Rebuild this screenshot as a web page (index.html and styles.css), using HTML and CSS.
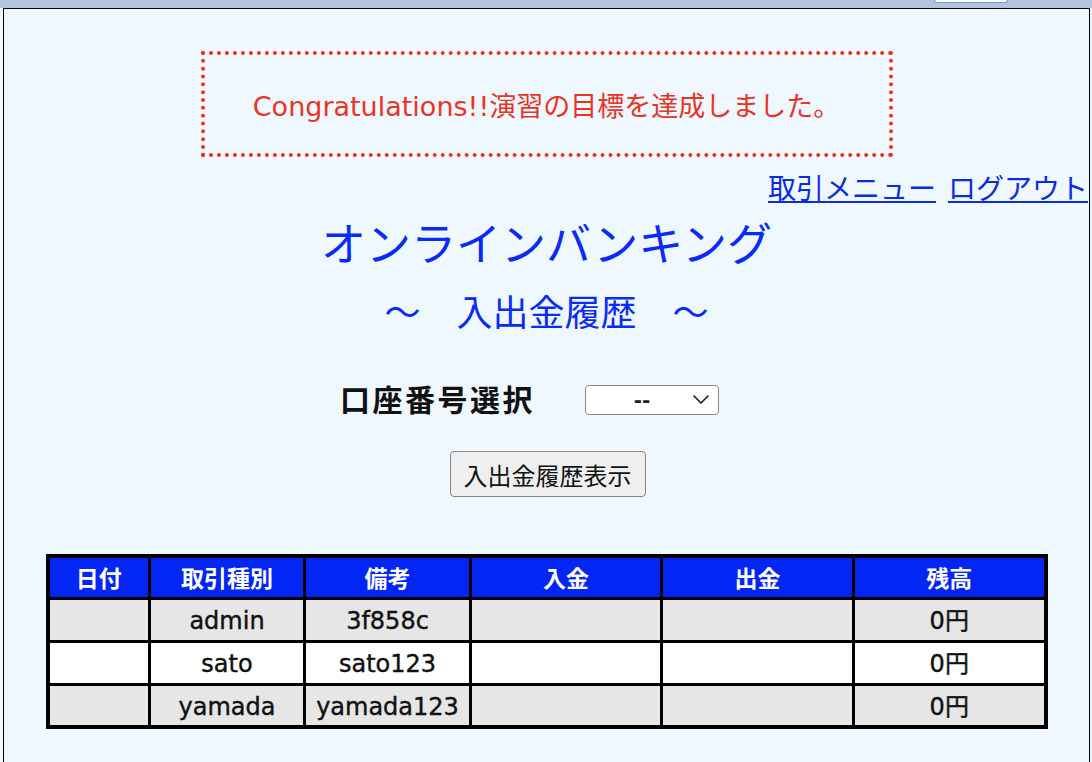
FILE: index.html
```html
<!DOCTYPE html>
<html lang="ja">
<head>
<meta charset="utf-8">
<title>オンラインバンキング</title>
<link rel="stylesheet" href="styles.css">
</head>
<body>
<div class="topbar"><span class="topbtn"></span></div>
<div class="page">
  <div class="congrats">Congratulations!!演習の目標を達成しました。</div>
  <div class="links"><a href="#">取引メニュー</a><a href="#">ログアウト</a></div>
  <h1 class="title">オンラインバンキング</h1>
  <h2 class="subtitle">～　入出金履歴　～</h2>
  <div class="selectrow">
    <span class="label">口座番号選択</span>
    <span class="selectbox"><span class="selval">--</span><svg class="chev" width="18" height="11" viewBox="0 0 18 11"><path d="M2 2 L9 9 L16 2" fill="none" stroke="#222" stroke-width="1.7" stroke-linecap="round" stroke-linejoin="round"/></svg></span>
  </div>
  <div class="btnrow"><button class="btn" type="button">入出金履歴表示</button></div>
  <table class="history">
    <colgroup>
      <col class="c1"><col class="c2"><col class="c3"><col class="c4"><col class="c5"><col class="c6">
    </colgroup>
    <thead>
      <tr><th>日付</th><th>取引種別</th><th>備考</th><th>入金</th><th>出金</th><th>残高</th></tr>
    </thead>
    <tbody>
      <tr class="odd"><td></td><td>admin</td><td>3f858c</td><td></td><td></td><td>0円</td></tr>
      <tr class="even"><td></td><td>sato</td><td>sato123</td><td></td><td></td><td>0円</td></tr>
      <tr class="odd"><td></td><td>yamada</td><td>yamada123</td><td></td><td></td><td>0円</td></tr>
    </tbody>
  </table>
</div>
</body>
</html>
```
FILE: styles.css
```css
* { box-sizing: border-box; }
html, body {
  margin: 0;
  padding: 0;
  height: 100%;
  overflow: hidden;
}
body {
  font-family: "Noto Sans CJK JP", "Noto Sans", sans-serif;
  background: #f0f8ff;
}
.topbar {
  height: 8px;
  background: #b3c4de;
  display: flex;
  justify-content: flex-end;
  align-items: flex-start;
  padding-right: 84px;
}
.topbtn {
  display: block;
  width: 74px;
  height: 3px;
  background: #fff;
  border: 1px solid #7d98d6;
  border-top: none;
  border-radius: 0 0 4px 4px;
}
.page {
  margin: 0 2px 0 3px;
  border: 1px solid #000;
  border-bottom: none;
  min-height: 760px;
  background: #f0f8ff;
  padding-top: 42px;
}
.congrats {
  width: 692px;
  height: 106px;
  margin: 0 auto;
  border: 4px dotted #ea3323;
  color: #ea3323;
  font-family: "DejaVu Sans", "Noto Sans CJK JP", sans-serif;
  font-size: 27px;
  display: flex;
  align-items: center;
  justify-content: center;
}
.links {
  display: flex;
  justify-content: flex-end;
  gap: 12px;
  font-size: 28px;
  line-height: 40px;
  margin-top: 10px;
  padding-right: 1px;
}
.links a {
  color: #0b2be0;
  text-decoration: underline;
  text-decoration-thickness: 2px;
  text-underline-offset: 2px;
}
.title {
  margin: 0;
  text-align: center;
  font-size: 45px;
  font-weight: normal;
  color: #0a2af5;
  line-height: 60px;
  margin-top: 5px;
}
.subtitle {
  margin: 0;
  text-align: center;
  font-size: 36px;
  font-weight: normal;
  color: #0a2af5;
  line-height: 50px;
  margin-top: 13px;
}
.selectrow {
  display: flex;
  justify-content: center;
  align-items: center;
  gap: 50px;
  margin-top: 44px;
  padding-right: 34px;
}
.label {
  font-size: 30px;
  font-weight: bold;
  color: #111;
  letter-spacing: 2.5px;
  margin-top: -3px;
}
.selectbox {
  width: 134px;
  height: 30px;
  background: #fff;
  border: 1px solid #8a8a8a;
  border-radius: 4px;
  display: flex;
  align-items: center;
  padding: 0 8px 0 0;
}
.selval {
  flex: 1;
  text-align: center;
  font-family: "DejaVu Sans", sans-serif;
  font-size: 20px;
  font-weight: bold;
  color: #222;
  padding-left: 6px;
}
.chev { display: block; }
.btnrow {
  display: flex;
  justify-content: center;
  margin-top: 31px;
}
.btn {
  font-family: "Noto Sans CJK JP", sans-serif;
  font-size: 24px;
  height: 46px;
  padding: 0 13px;
  background: #efefef;
  border: 1px solid #888;
  border-radius: 4px;
  color: #111;
  margin-left: 2px;
}
.history {
  width: 1002px;
  margin: 57px auto 0;
  border-collapse: collapse;
  table-layout: fixed;
  border: 4px solid #000;
}
.c1 { width: 102px; }
.c2 { width: 155px; }
.c3 { width: 166px; }
.c4 { width: 191px; }
.c5 { width: 192px; }
.c6 { width: 192px; }
.history th, .history td {
  border: 3.5px solid #000;
  text-align: center;
  padding: 0;
}
.history th {
  background: #0426f5;
  color: #fff;
  font-size: 23px;
  font-weight: bold;
  height: 42px;
}
.history td {
  font-family: "DejaVu Sans", "Noto Sans CJK JP", sans-serif;
  font-size: 24px;
  line-height: 30px;
  font-weight: normal;
  -webkit-text-stroke: 0.4px #111;
  color: #111;
  height: 43px;
  padding-top: 3px;
}
.history tr.odd td { background: #e6e6e6; }
.history tr.even td { background: #fff; }
```
